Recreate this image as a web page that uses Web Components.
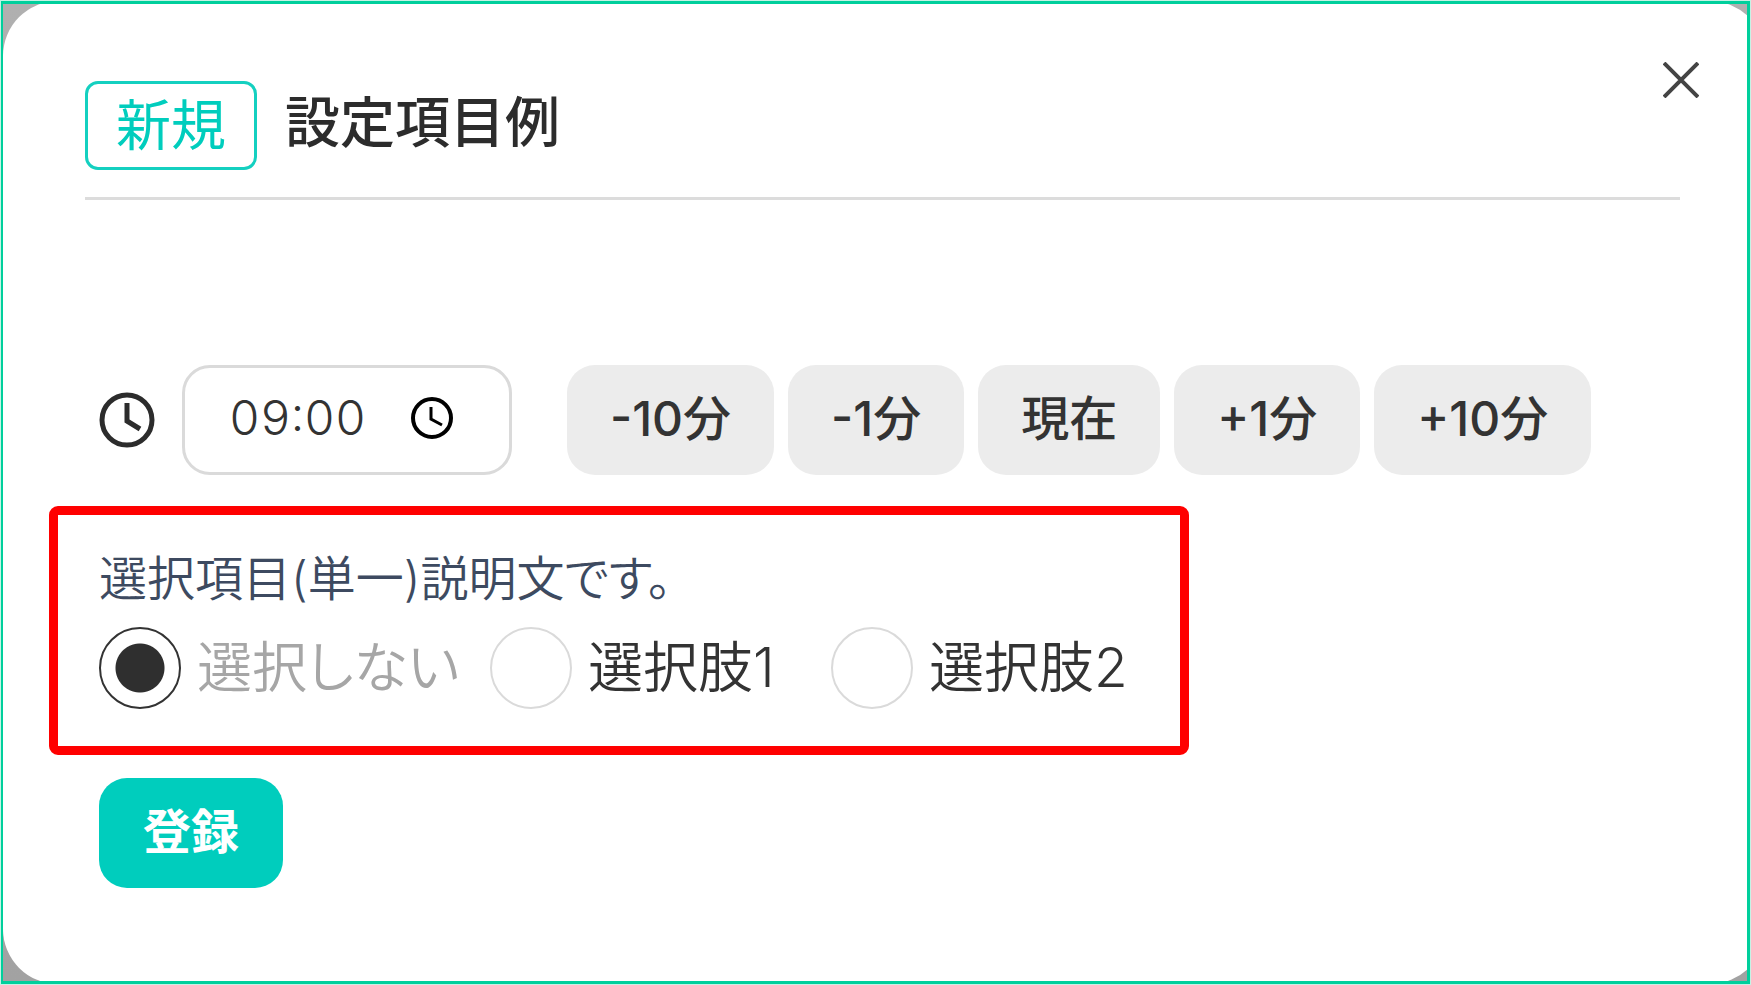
<!DOCTYPE html>
<html lang="ja">
<head>
<meta charset="utf-8">
<meta name="viewport" content="width=device-width, initial-scale=1">
<title>設定項目例</title>
<style>
body { margin: 0; font-family: Inter, "Noto Sans CJK JP", sans-serif; color: #333; background: #fff; }
</style>
</head>
<body>
<modal-frame>
  <modal-header badge="新規">設定項目例</modal-header>
  <time-row value="09:00">
    <step-button>-10分</step-button>
    <step-button>-1分</step-button>
    <step-button>現在</step-button>
    <step-button>+1分</step-button>
    <step-button>+10分</step-button>
  </time-row>
  <choice-group>選択項目(単一)説明文です。</choice-group>
  <submit-button>登録</submit-button>
</modal-frame>
<script>
const define = (name, html, setup) => customElements.define(name, class extends HTMLElement {
  constructor() {
    super();
    const t = document.createElement('template');
    t.innerHTML = '<style>*{box-sizing:border-box}button,input{font-family:inherit;color:inherit;margin:0}</style>' + html;
    this.attachShadow({ mode: 'open' }).append(t.content.cloneNode(true));
  }
  connectedCallback() { if (setup) setup(this, this.shadowRoot); }
});

define('modal-frame', `
<style>
:host { display: flex; box-sizing: border-box; min-height: 100vh; padding: 1px; background: #c5f3e5; }
.frame { flex: 1; display: flex; min-width: 0; border: 3px solid #00cf9c; border-left-width: 2px; overflow: hidden;
  background: linear-gradient(#b0b0b0, #a2a2a2); }
/* the dialog runs slightly past the framed area */
.dialog { flex: 1; min-width: 0; margin: -3px -18px -3px 0; padding: 80px 85px 0 82px;
  border-radius: 55px; background: #fff; }
</style>
<div class="frame"><main class="dialog"><slot></slot></main></div>`);

define('modal-header', `
<style>
:host { display: block; position: relative; }
header { display: flex; align-items: flex-start; gap: 28px; padding-bottom: 27px; border-bottom: 3px solid #dcdcdc; }
.badge { border: 3px solid #14d0c0; border-radius: 13px; padding: 0 28px; color: #00cdbd;
  font-size: 55px; line-height: 83px; font-weight: 400; }
h1 { margin: 0; font-size: 55px; line-height: 83px; font-weight: 500; color: #2c2c2c; }
button { position: absolute; right: -19px; top: -19px; padding: 0; border: 0; background: none; display: block; cursor: pointer; }
svg { display: block; }
</style>
<header><span class="badge"></span><h1><slot></slot></h1></header>
<button type="button" aria-label="閉じる"><svg width="36" height="36" viewBox="0 0 36 36" fill="none" stroke="#444" stroke-width="4"><path d="M1 1L35 35M35 1L1 35"/></svg></button>`,
(el, root) => { root.querySelector('.badge').textContent = el.getAttribute('badge'); });

define('time-row', `
<style>
:host { display: flex; flex-wrap: wrap; align-items: center; margin: 165px 0 0 14px; }
svg { display: block; }
.field { display: flex; align-items: center; width: 330px; height: 110px; margin: 0 55px 0 27px;
  padding: 0 56px 4px 44px; border: 3px solid #dadada; border-radius: 28px; }
input { flex: 1; min-width: 0; padding: 0; border: 0; outline: 0; background: none; font-size: 48px; line-height: 72px; font-weight: 350; font-feature-settings: "tnum"; }
.field button { padding: 0; border: 0; background: none; color: #000; }
.steps { display: flex; flex-wrap: wrap; gap: 14px; }
</style>
<svg width="56" height="56" viewBox="0 0 56 56" fill="none" stroke="#2c2c2c" stroke-width="5"><circle cx="28" cy="28" r="25"/><path d="M28 11V29L41 37"/></svg>
<div class="field">
  <input type="text" inputmode="numeric" aria-label="時刻">
  <button type="button" aria-label="時刻を選択"><svg width="42" height="42" viewBox="0 0 42 42" fill="none" stroke="currentColor" stroke-width="4"><circle cx="21" cy="21" r="19"/><path d="M20 10V22L31 28" stroke-width="3"/></svg></button>
</div>
<div class="steps"><slot></slot></div>`,
(el, root) => { root.querySelector('input').value = el.getAttribute('value'); });

define('step-button', `
<style>
:host { display: block; }
button { display: block; height: 110px; padding: 0 43px 2px; border: 0; border-radius: 28px; background: #ececec;
  font-size: 48px; line-height: 72px; font-weight: 500; color: #333; white-space: nowrap; }
</style>
<button type="button"><slot></slot></button>`);

define('choice-group', `
<style>
:host { display: block; margin: 31px 0 0 -36px; }
fieldset { width: fit-content; min-width: 1140px; max-width: 100%; margin: 0; padding: 28px 41px 37px;
  border: 9px solid #f00; border-radius: 9px; font-feature-settings: "palt"; }
.desc { margin: 0; font-size: 48px; line-height: 72px; font-weight: 350; color: #3d4a60; }
.options { display: grid; grid-template-columns: 391px 341px auto; margin-top: 12px; }
label { display: flex; align-items: flex-start; gap: 16px; font-size: 55px; line-height: 80px; font-weight: 350; white-space: nowrap; }
input { appearance: none; flex: none; width: 82px; height: 82px; border: 2px solid #dadada; border-radius: 50%; background: #fff; }
input:checked { border-color: #333; background: radial-gradient(circle, #2f2f2f 24px, #fff 25px); }
label:has(:checked) { color: #a6a6a6; }
</style>
<fieldset aria-labelledby="d">
  <p class="desc" id="d"><slot></slot></p>
  <div class="options">
    <label><input type="radio" name="choice" checked><span>選択しない</span></label>
    <label><input type="radio" name="choice"><span>選択肢1</span></label>
    <label><input type="radio" name="choice"><span>選択肢2</span></label>
  </div>
</fieldset>`);

define('submit-button', `
<style>
:host { display: block; margin: 23px 0 90px 14px; }
button { display: block; height: 110px; padding: 0 44px 2px; border: 0; border-radius: 28px; background: #00cdbd;
  font-size: 48px; line-height: 72px; font-weight: 700; color: #fff; }
</style>
<button type="submit"><slot></slot></button>`);
</script>
</body>
</html>
